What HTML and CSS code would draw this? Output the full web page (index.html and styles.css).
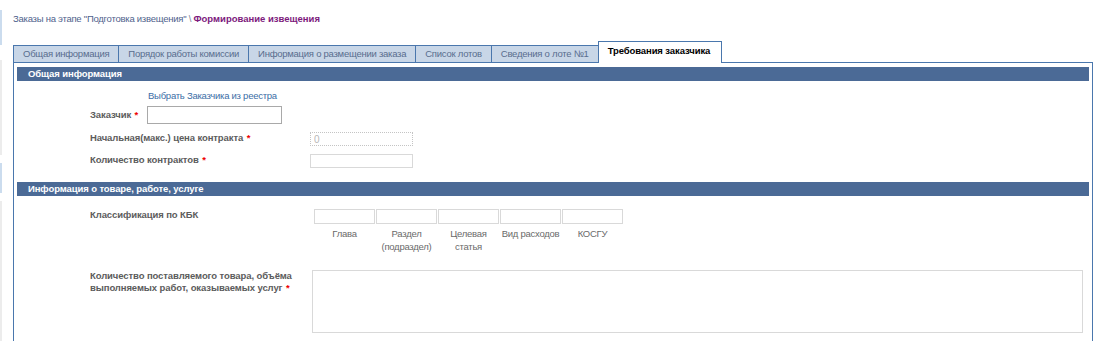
FILE: index.html
```html
<!DOCTYPE html>
<html lang="ru">
<head>
    <meta charset="UTF-8">
    <title>Формирование извещения</title>
    <link rel="stylesheet" href="styles.css">
</head>
<body>
    <div class="page">
        <div class="edge">
            <div class="edge-part blue first"></div>
            <div class="edge-part gray tall"></div>
            <div class="edge-part blue"></div>
            <div class="edge-part gray rest"></div>
        </div>

        <div class="main">
            <div class="breadcrumb">
                <a href="#" class="crumb">Заказы на этапе "Подготовка извещения"</a> \ <span class="crumb-current">Формирование извещения</span>
            </div>

            <ul class="tabs">
                <li class="tab">Общая информация</li>
                <li class="tab">Порядок работы комиссии</li>
                <li class="tab">Информация о размещении заказа</li>
                <li class="tab">Список лотов</li>
                <li class="tab">Сведения о лоте №1</li>
                <li class="tab active">Требования заказчика</li>
            </ul>

            <div class="panel">
                <div class="section-title">Общая информация</div>

                <div class="registry-link"><a href="#">Выбрать Заказчика из реестра</a></div>

                <div class="row row-customer">
                    <label class="label-inline">Заказчик <span class="req">*</span></label>
                    <input type="text" class="input input-customer">
                </div>

                <div class="row">
                    <label class="label">Начальная(макс.) цена контракта <span class="req">*</span></label>
                    <input type="text" class="input input-small input-readonly" value="0" readonly>
                </div>

                <div class="row">
                    <label class="label">Количество контрактов <span class="req">*</span></label>
                    <input type="text" class="input input-small">
                </div>

                <div class="section-title second">Информация о товаре, работе, услуге</div>

                <div class="row row-kbk">
                    <label class="label label-kbk">Классификация по КБК</label>
                    <div class="kbk">
                        <div class="kbk-cell">
                            <input type="text" class="input input-kbk">
                            <span class="kbk-caption">Глава</span>
                        </div>
                        <div class="kbk-cell">
                            <input type="text" class="input input-kbk">
                            <span class="kbk-caption">Раздел<br>(подраздел)</span>
                        </div>
                        <div class="kbk-cell">
                            <input type="text" class="input input-kbk">
                            <span class="kbk-caption">Целевая<br>статья</span>
                        </div>
                        <div class="kbk-cell">
                            <input type="text" class="input input-kbk">
                            <span class="kbk-caption">Вид расходов</span>
                        </div>
                        <div class="kbk-cell">
                            <input type="text" class="input input-kbk">
                            <span class="kbk-caption">КОСГУ</span>
                        </div>
                    </div>
                </div>

                <div class="row row-amount">
                    <label class="label label-amount">Количество поставляемого товара, объёма выполняемых работ, оказываемых услуг <span class="req">*</span></label>
                    <textarea class="textarea"></textarea>
                </div>
            </div>
        </div>
    </div>
</body>
</html>
```

FILE: styles.css
```css
body {
    margin: 0;
    font-family: "Liberation Sans", Arial, sans-serif;
    font-size: 9.5px;
    letter-spacing: -0.25px;
    color: #333;
    background: #fff;
    overflow: hidden;
}
.page {
    display: flex;
    height: 341px;
}
.edge {
    width: 2px;
    display: flex;
    flex-direction: column;
}
.edge-part {
    height: 30px;
    margin-top: 8px;
}
.edge-part.first {
    margin-top: 10px;
    height: 35px;
}
.edge-part.tall {
    margin-top: 15px;
    height: 95px;
}
.edge-part.rest {
    flex: 1;
    margin-top: 8px;
}
.edge-part.blue {
    background: #cbdcee;
}
.edge-part.gray {
    background: #ececec;
}
.main {
    flex: 1;
    padding-left: 11px;
    padding-right: 10px;
}
.breadcrumb {
    padding-top: 12px;
    height: 28px;
    line-height: 13px;
    color: #7a869e;
}
.crumb {
    color: #4f5f8c;
    text-decoration: none;
}
.crumb-current {
    color: #7d1a7d;
    font-weight: bold;
    letter-spacing: 0;
}
.tabs {
    display: flex;
    align-items: flex-end;
    list-style: none;
    margin: 0;
    padding: 0;
    height: 22px;
}
.tab {
    height: 16px;
    line-height: 16px;
    padding: 0 9px;
    background: #c8d6e7;
    border: 1px solid #4a77ad;
    border-bottom: none;
    margin-left: -1px;
    color: #586d8e;
}
.tab:first-child {
    margin-left: 0;
}
.tab.active {
    height: 21px;
    line-height: 18px;
    padding: 0 11px 0 9px;
    background: #fff;
    color: #000;
    font-weight: bold;
    letter-spacing: -0.1px;
    margin-bottom: -1px;
    position: relative;
}
.panel {
    border: 1px solid #4a77ad;
    padding: 4px 3px 0;
    height: 300px;
}
.section-title {
    background: #4b6a96;
    color: #fff;
    font-weight: bold;
    letter-spacing: -0.1px;
    height: 14px;
    line-height: 14px;
    padding-left: 11px;
}
.section-title.second {
    margin-top: 14px;
}
.registry-link {
    padding: 8px 0 0 131px;
    height: 17px;
    line-height: 13px;
}
.registry-link a {
    color: #3c6ea6;
    text-decoration: none;
}
.row {
    display: flex;
    align-items: flex-start;
    padding-left: 73px;
    margin-top: 8px;
}
.row-customer {
    margin-top: 0;
    align-items: center;
}
.label,
.label-inline {
    font-weight: bold;
    letter-spacing: -0.1px;
    color: #5c5c5c;
    line-height: 12px;
}
.label {
    width: 220px;
    flex: none;
}
.label-inline {
    margin-right: 9px;
}
.req {
    color: #e00;
    letter-spacing: 0;
    padding-left: 1px;
}
.input {
    box-sizing: border-box;
    margin: 0;
    font-family: inherit;
    font-size: 10px;
    border: 1px solid #d9d9d9;
    background: #fff;
    padding: 0 3px;
}
.input-customer {
    width: 135px;
    height: 18px;
    border-color: #a9a9a9;
}
.input-small {
    width: 103px;
    height: 14px;
}
.input-readonly {
    border: 1px dotted #c4c4c4;
    color: #b8b8b8;
    line-height: 12px;
}
.row-kbk {
    margin-top: 13px;
}
.label-kbk {
    width: 224px;
}
.kbk {
    display: flex;
    gap: 1px;
}
.kbk-cell {
    width: 61px;
    display: flex;
    flex-direction: column;
    align-items: center;
}
.input-kbk {
    width: 61px;
    height: 15px;
}
.kbk-caption {
    margin-top: 3px;
    color: #6a6a6a;
    text-align: center;
    line-height: 13px;
    white-space: nowrap;
}
.row-amount {
    margin-top: 17px;
}
.label-amount {
    width: 205px;
    margin-right: 17px;
}
.textarea {
    box-sizing: border-box;
    width: 771px;
    height: 63px;
    margin: 0;
    border: 1px solid #d9d9d9;
    resize: none;
}
```
